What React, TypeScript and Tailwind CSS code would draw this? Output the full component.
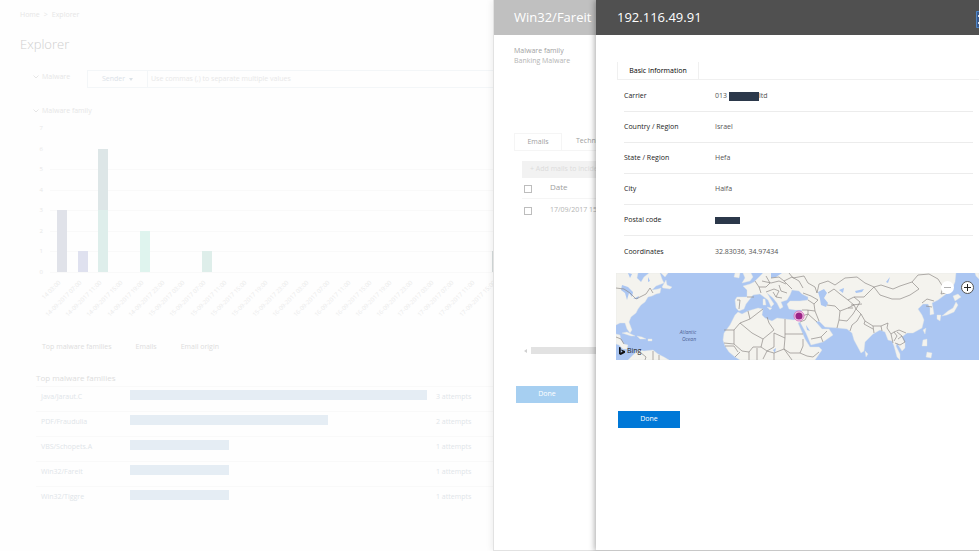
import { useState } from 'react'
import type { ReactNode } from 'react'

interface Family {
  name: string
  attempts: number
}

interface Bar {
  slot: number
  from: number
  to: number
  color: string
}

const FAMILIES: Family[] = [
  { name: 'Java/Jaraut.C', attempts: 3 },
  { name: 'PDF/Fraudulia', attempts: 2 },
  { name: 'VBS/Schopets.A', attempts: 1 },
  { name: 'Win32/Fareit', attempts: 1 },
  { name: 'Win32/Tiggre', attempts: 1 },
]

const BARS: Bar[] = [
  { slot: 0, from: 0, to: 3, color: '#e0e2e9' },
  { slot: 1, from: 0, to: 1, color: '#dfe1ef' },
  { slot: 2, from: 0, to: 3, color: '#deeeeb' },
  { slot: 2, from: 3, to: 6, color: '#dde6e7' },
  { slot: 4, from: 0, to: 2, color: '#dff4ee' },
  { slot: 7, from: 0, to: 1, color: '#deeeea' },
  { slot: 21, from: 0, to: 1, color: '#d5dbdb' },
]

const HOURS = ['03:00', '07:00', '11:00', '15:00', '19:00', '23:00']

const SLOTS = Array.from({ length: 22 }, (_, i) => ({
  x: 26 + Math.round(i * 20.7),
  label: i === 0 ? '14 03:00' : `${14 + Math.floor(i / 6)}-09-2017 ${HOURS[i % 6]}`,
}))

const LAND = [
  // north america
  'M0 0H22L21 5L25 9L28 4L33 0H44L46 6L48 10L40 13L36 17L42 16L45 15L44 20L40 21L36 23L32 24L29 29L25 32L22 36L20 40L15 44L13 49L16 57L14 60L11 56L9 50L4 50L0 52Z',
  'M46 14L50 7L51 12L56 14L54 16L47 15Z',
  'M45 0H52L49 4Z',
  // caribbean and the north of south america
  'M6 60L11 59L19 63L15 63L9 61Z',
  'M21 63L26 64L30 66L24 66Z',
  'M32 66H36V68H32Z',
  'M0 61L4 62L5 67L8 71L12 72L11 76L7 76L3 72L0 71Z',
  'M12 87L17 82L23 77L28 78L37 77L42 81L48 84L53 87Z',
  // british isles
  'M119 0H124L123 5L118 4Z',
  'M127 0H135L137 4L134 8L126 10L129 5Z',
  // europe, africa and asia down the mediterranean
  'M147 0L142 5L138 9L134 11L127 13L131 17V24H121L119 27L120 35L123 38L128 36L130 31L134 26L137 22L144 21L148 24L152 27L155 34L158 31L154 25L151 20L157 25L161 30L164 36L167 34L165 29L171 27L174 22L176 17L183 18L186 21L192 24L192 27L184 28L174 28L171 31L173 36L179 37L186 37L184 44L178 47L169 46L161 45L156 48L149 45L146 42L147 36L142 35L132 38L126 41L122 39L119 42L114 52L108 60L107 67L109 73L113 79L119 84L124 87H199L206 77L203 74L194 74L189 66L182 50L184 49L190 60L195 72L207 69L217 62L213 56L206 56L200 49L203 48L209 54L222 55L231 56L236 60L238 67L245 80L248 78L249 69L257 61L264 57L269 59L272 67L276 68L278 73L281 84L284 87L284 81L280 73L281 70L286 78L289 75L289 70L286 64L291 60L297 60L306 55L308 47L306 42L302 36L307 31L312 31L314 35L314 42L318 41L317 35L316 30L322 27L330 21L336 16L339 9L340 0Z',
  // islands
  'M337 23L342 21L345 24L339 28Z',
  'M340 29L342 32L338 39L331 42L326 43L332 38L337 35Z',
  'M321 42L325 42L324 48L321 46Z',
  'M307 57L310 55L309 61Z',
  'M307 67L311 66L311 73L306 73Z',
  'M311 79L316 80L315 85L310 84Z',
  'M249 78L252 81L250 84Z',
  'M147 26H149L150 32H147Z',
  'M151 34L156 35L154 37Z',
  'M359 0H363V6L360 3Z',
]

const LAKES = [
  'M6 12L12 14L17 19L16 24L13 20L11 27L9 20L5 17Z',
  'M17 26L23 23L22 26Z',
  'M12 0L16 1L14 5Z',
  'M32 4L34 8L32 9Z',
  'M202 19L208 16L211 20L208 25L212 30L210 34L205 32L204 26Z',
  'M223 17L228 15L227 20Z',
  'M239 18L248 16L246 19L240 20Z',
  'M155 0H166L160 4L155 5Z',
  'M190 52L194 58L191 57Z',
  'M157 77L160 75L159 80Z',
  'M270 9L274 4L272 10Z',
]

const BORDERS = [
  'M0 15L8 16L14 20L20 26L30 21L34 15L37 20',
  'M0 64L5 66L8 71M24 79L30 84L29 87M37 78V87M43 82V87',
  'M121 27L124 27L123 36M131 24L138 24M139 8L143 14L145 20M143 14L150 14L154 10L150 3M146 8L155 10L163 8L170 11M150 19L158 16L163 18M157 19L160 24L166 25M163 12L165 18L171 20M163 18L160 24M171 11L176 16M155 5L163 4L168 8L176 4L183 8L187 15M168 8L171 11',
  'M173 0L177 5L188 3L192 10L199 14L201 20M187 20L195 23L202 27M192 27L198 31L202 27M198 31L199 38L203 48',
  'M132 38L134 46L124 50L118 57L108 57M124 50L136 60L147 66L158 57L153 50L151 44M134 46L147 36M118 57V71L108 70M169 46V61H187M169 61V65L158 60M147 66L145 74L137 74L133 79L126 78L118 71M145 74L151 78L158 74L158 60M169 65L168 76L158 80L151 78M168 76L174 80L184 80L187 73L187 66M133 79V87M141 75V87M151 78L147 86M158 80V87M168 76L176 87M184 80L191 83L197 84L203 79M109 73L118 73L122 79M119 84L124 79',
  'M186 37L191 37L199 38M186 43L192 41L192 37M192 41L201 49M184 49L189 47L192 41M195 66L205 64L211 58M205 64L207 69',
  'M201 20L203 11L212 8L219 12L229 5L241 4L249 10L258 14L265 12L277 16L284 13L296 9L302 2L313 1L322 6L327 14L325 21L330 20',
  'M212 20L218 16L224 21L232 27L238 24L248 24L251 21L258 14M211 32L219 33L224 38L232 35L238 32L232 27M224 38L223 47L221 55M223 47L231 48L237 41L240 36L238 32M238 24L244 29L240 36L245 41L241 48L236 52L234 58M245 41L249 48L257 53L265 53L272 50',
  'M258 14L264 22L276 26L284 26L294 22L303 16L296 9M257 53L258 60M265 53L266 58M249 48L248 51L257 56M272 50L271 55L275 61L278 59L281 63L278 68M275 61L277 70M281 59L286 63L289 69L284 72L279 70M278 59L283 57L290 60M286 63L282 66M306 30L311 26L318 28M310 33L316 34M232 35L237 35M235 32L246 31',
]

const DETAILS: { label: string; value: ReactNode }[] = [
  {
    label: 'Carrier',
    value: (
      <span className="flex items-center">
        013
        <span className="ml-[2px] h-[9px] w-[30px] bg-[#2b384a]" />
        ltd
      </span>
    ),
  },
  { label: 'Country / Region', value: 'Israel' },
  { label: 'State / Region', value: 'Hefa' },
  { label: 'City', value: 'Haifa' },
  { label: 'Postal code', value: <span className="block h-[7px] w-[25px] bg-[#2b384a]" /> },
  { label: 'Coordinates', value: '32.83036, 34.97434' },
]

function Chevron() {
  return (
    <svg viewBox="0 0 6 4" className="h-1 w-[6px]" fill="none" stroke="currentColor">
      <path d="M0.5 0.5L3 3L5.5 0.5" />
    </svg>
  )
}

function AttemptsChart() {
  const y = (n: number) => 152 - Math.round(n * 20.5)

  return (
    <svg viewBox="0 0 470 210" className="mt-1 block h-[210px] w-[470px] overflow-visible font-['Open_Sans',sans-serif]">
      {[0, 1, 2, 3, 4, 5].map((n) => (
        <path key={n} d={`M14 ${y(n) + 0.5}H470`} stroke="#f9f9f9" />
      ))}
      {[0, 1, 2, 3, 4, 5, 6, 7].map((n) => (
        <text key={n} x="7" y={y(n) + 2} textAnchor="end" fontSize="6" fill="#e8e8e8">{n}</text>
      ))}
      {BARS.map((b) => (
        <rect
          key={`${b.slot}-${b.from}`}
          x={SLOTS[b.slot].x - 5}
          y={y(b.to)}
          width="10"
          height={y(b.from) - y(b.to)}
          fill={b.color}
        />
      ))}
      {SLOTS.map((s) => (
        <text
          key={s.x}
          transform={`translate(${s.x - 1} 163) rotate(-45)`}
          textAnchor="end"
          fontSize="6"
          fill="#ebebeb"
        >
          {s.label}
        </text>
      ))}
    </svg>
  )
}

function Explorer() {
  return (
    <main className="px-5 pt-[10px] text-[#e6e6e6]">
      <nav className="flex gap-1 leading-[10px]">
        <a href="#home">Home</a>
        <span>&gt;</span>
        <a href="#explorer">Explorer</a>
      </nav>
      <h1 className="mt-[14px] text-[13px] leading-5 font-light text-[#cfcfcf]">Explorer</h1>

      <div className="mt-4 flex h-[18px] pl-[13px]">
        <button className="flex h-[14px] w-[54px] items-center gap-[3px]">
          <Chevron />
          Malware
        </button>
        <div className="flex flex-1 border border-[#f3f6f8]">
          <button className="flex w-[60px] items-center justify-center gap-1 border-r border-[#f3f6f8] text-[#dbe2e8]">
            Sender <span className="border-x-2 border-t-3 border-x-transparent border-t-[#dbe2e8]" />
          </button>
          <input
            type="text"
            aria-label="Sender"
            placeholder="Use commas (,) to separate multiple values"
            className="flex-1 px-[3px] placeholder:text-[#e8e8e8]"
          />
        </div>
      </div>

      <div className="pl-[13px]">
        <button className="mt-[18px] flex h-[10px] items-center gap-[3px]">
          <Chevron />
          Malware family
        </button>
      </div>
      <div className="pl-4">
        <AttemptsChart />
        <div className="mt-3 flex gap-6 pl-[6px] leading-[10px] text-[#dddddd]">
          <button>Top malware families</button>
          <button>Emails</button>
          <button>Email origin</button>
        </div>
        <h2 className="mt-5 text-[8px] leading-3 text-[#dddddd]">Top malware families</h2>
        <table className="mt-[2px] w-full table-fixed border-collapse">
          <tbody>
            {FAMILIES.map((f) => (
              <tr key={f.name} className="h-[25px] border-t border-[#f9f9f9] align-top">
                <td className="w-[94px] pt-[5px] pl-[5px] leading-[10px] text-[#dfe5e9]">{f.name}</td>
                <td className="w-[306px] pt-[3px]">
                  <div className="h-[10px] w-[297px]">
                    <div className="h-full bg-[#e5edf4]" style={{ width: `${(f.attempts / 3) * 100}%` }} />
                  </div>
                </td>
                <td className="pt-[5px] leading-[10px] text-[#dfe5e9]">{f.attempts} attempts</td>
              </tr>
            ))}
          </tbody>
        </table>
      </div>
    </main>
  )
}

function FamilyPanel() {
  return (
    <aside className="absolute inset-y-0 right-0 w-[486px] overflow-hidden border-b border-l border-[#e2e2e2] bg-white text-[#a0a0a0] shadow-[-2px_0_6px_rgba(0,0,0,0.06)]">
      <h2 className="h-[35px] bg-[#c0c0c0] pl-5 text-[13px] leading-[35px] text-white">Win32/Fareit</h2>
      <div className="pt-[11px] pl-5 leading-[10px]">
        <p>Malware family</p>
        <p className="text-[#b4b4b4]">Banking Malware</p>
      </div>
      <div className="mt-[67px] ml-5 flex h-[18px] border-b border-[#f5f5f5]">
        <button className="w-12 border-x border-t border-[#f5f5f5]">Emails</button>
        <button className="px-[14px]">Technical details</button>
      </div>
      <div className="mt-[10px] ml-7">
        <button className="block h-[17px] w-full bg-[#f2f2f2] px-2 text-left text-[#dcdcdc]">+ Add mails to incident</button>
        <table className="w-full border-collapse text-left">
          <thead>
            <tr className="h-[20px] border-b border-[#f5f5f5]">
              <th className="w-7 pt-[2px] pl-[2px]">
                <input type="checkbox" aria-label="Select all" className="block size-2 appearance-none border border-[#bdbdbd]" />
              </th>
              <th className="pb-[2px] text-[8px] font-normal">Date</th>
            </tr>
          </thead>
          <tbody>
            <tr className="h-[24px]">
              <td className="pt-[2px] pl-[2px]">
                <input type="checkbox" aria-label="Select mail" className="block size-2 appearance-none border border-[#bdbdbd]" />
              </td>
              <td className="text-[#b4b4b4]">17/09/2017 15:20</td>
            </tr>
          </tbody>
        </table>
        <div className="mt-[124px] flex h-[9px] items-center gap-1 pl-[2px] text-[#c8c8c8]">
          <span className="border-y-2 border-r-3 border-y-transparent border-r-[#d0d0d0]" />
          <span className="h-[7px] flex-1 bg-[#e2e2e2]" />
        </div>
      </div>
      <button className="mt-[31px] ml-[22px] block h-[17px] w-[62px] bg-[#a6cff1] text-white">Done</button>
    </aside>
  )
}

function LocationMap() {
  const [zoom, setZoom] = useState(1)

  return (
    <div className="relative h-[87px] overflow-hidden bg-[#abc6f2]">
      <svg viewBox="0 0 363 87" className="block h-full w-full" preserveAspectRatio="xMinYMin slice">
        <g fill="#f4f3ee" stroke="#dfe3e6" strokeWidth="0.4" strokeLinejoin="round">
          {LAND.map((d) => <path key={d} d={d} />)}
        </g>
        <g fill="#abc6f2">
          {LAKES.map((d) => <path key={d} d={d} />)}
        </g>
        <g fill="none" stroke="#8f8b88" strokeWidth="0.7" strokeLinejoin="round">
          {BORDERS.map((d) => <path key={d} d={d} />)}
        </g>
        <g fill="#4d6192" fontSize="5" fontStyle="italic" textAnchor="middle">
          <text x="72" y="61">Atlantic</text>
          <text x="73" y="68">Ocean</text>
        </g>
        <circle cx="183" cy="43" r="5" fill="#f3d3ea" stroke="#d35fb8" strokeWidth="0.8" />
        <circle cx="183" cy="43" r="3.6" fill="#9b2386" />
      </svg>
      <div className="absolute top-2 right-[5px] flex gap-[7px]">
        <button
          aria-label="Zoom out"
          onClick={() => setZoom(zoom - 1)}
          className="flex size-[13px] items-center justify-center rounded-full bg-white text-[#b0b0b0]"
        >
          <svg viewBox="0 0 7 7" className="size-[7px]" stroke="currentColor"><path d="M0 3.5H7" /></svg>
        </button>
        <button
          aria-label="Zoom in"
          onClick={() => setZoom(zoom + 1)}
          className="flex size-[13px] items-center justify-center rounded-full border border-[#555] bg-white text-[#222]"
        >
          <svg viewBox="0 0 7 7" className="size-[7px]" stroke="currentColor"><path d="M0 3.5H7M3.5 0V7" /></svg>
        </button>
      </div>
      <div className="absolute bottom-1 left-[3px] flex items-center gap-[2px] leading-[10px] text-[#222]">
        <svg viewBox="0 0 6 8" className="h-2 w-[6px]" fill="#111">
          <path d="M0 0L1.7 0.6V5.8L3.8 4.6L2.7 4.1L2.1 2.5L6 3.9V5.7L1.7 8L0 7Z" />
        </svg>
        Bing
      </div>
    </div>
  )
}

function AddressPanel() {
  return (
    <aside className="absolute inset-y-0 right-0 w-[383px] overflow-hidden border-b border-[#c8c8c8] bg-white text-[#222] shadow-[-1px_0_6px_rgba(0,0,0,0.35)]">
      <header className="flex h-[35px] items-center justify-between bg-[#505050] pl-[21px]">
        <h2 className="text-[13px] text-white">192.116.49.91</h2>
        <button aria-label="Close" className="mt-1 h-[17px] w-[3px]">
          <svg viewBox="0 0 3 17" className="h-[17px] w-[3px]">
            <path d="M0 0H3V17H0Z" fill="#39588a" />
            <path d="M3 0.5H0.5V16.5H3" fill="none" stroke="#4f86c6" />
            <path d="M2 4H3V6H2ZM2 11H3V13H2Z" fill="#d5deea" />
          </svg>
        </button>
      </header>
      <div className="mt-[27px] ml-[21px] flex h-[18px] border-b border-[#f0f0f0]">
        <button className="w-[82px] border-x border-[#f0f0f0] pt-[2px] font-medium text-black">Basic Information</button>
      </div>
      <table className="mr-[6px] ml-7 w-[349px] border-collapse">
        <tbody>
          {DETAILS.map((d) => (
            <tr key={d.label} className="h-[31px] border-b border-[#ececec] last:border-b-0">
              <th scope="row" className="w-[91px] pt-[2px] text-left font-medium">{d.label}</th>
              <td className="pt-[2px] text-[#555]">{d.value}</td>
            </tr>
          ))}
        </tbody>
      </table>
      <div className="mt-[7px] ml-5">
        <LocationMap />
      </div>
      <button className="mt-[51px] ml-[22px] block h-[17px] w-[62px] bg-[#0078d7] text-white">Done</button>
    </aside>
  )
}

export default function App() {
  return (
    <div className="relative min-h-screen overflow-hidden bg-[#fefefe] font-['Open_Sans',sans-serif] text-[7px]">
      <Explorer />
      <FamilyPanel />
      <AddressPanel />
    </div>
  )
}
